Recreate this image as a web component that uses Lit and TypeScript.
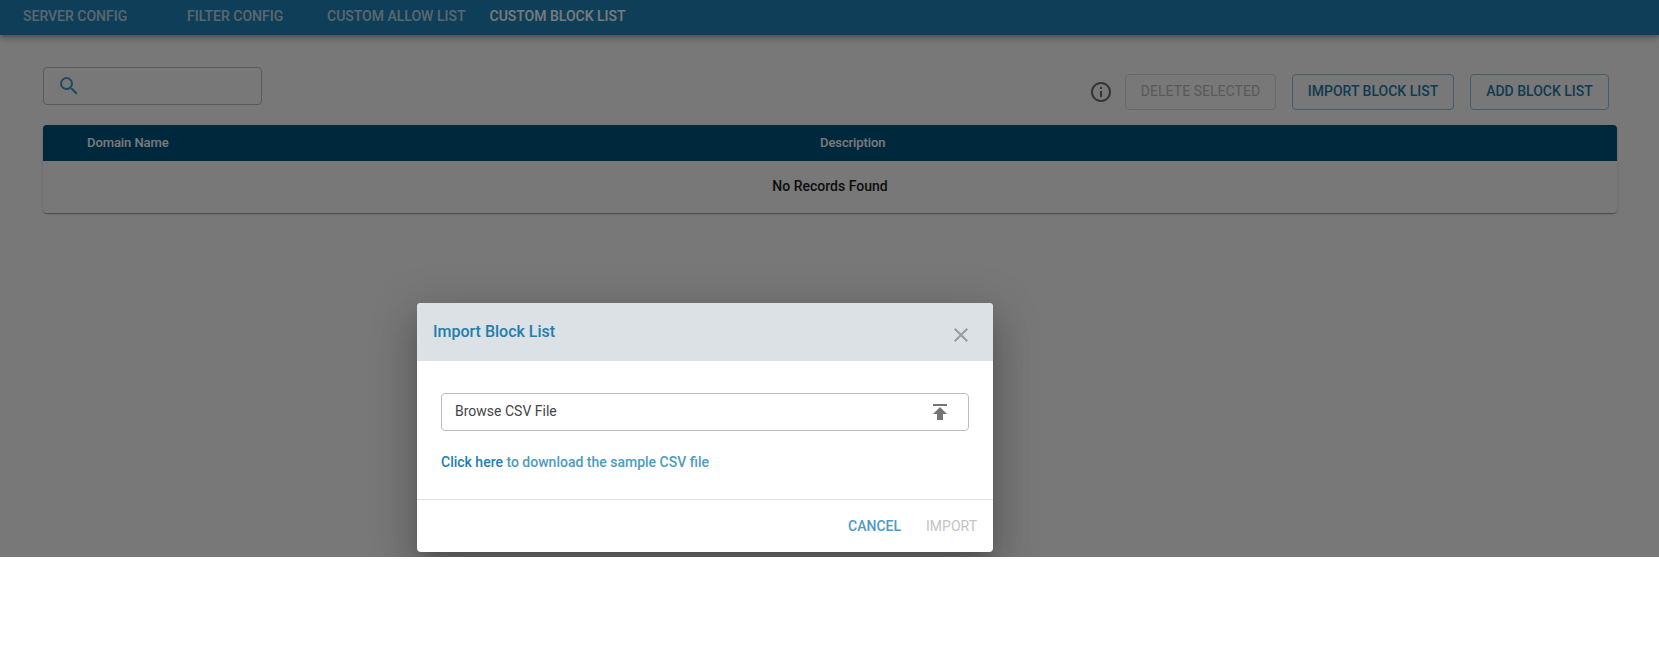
import { LitElement, html, css } from "lit";
import { customElement, state } from "lit/decorators.js";

@customElement("import-dialog")
class ImportDialog extends LitElement {
  static styles = css`
    :host {
      display: flex;
      flex-direction: column;
      width: 576px;
      height: 249px;
      border-radius: 4px;
      overflow: hidden;
      background: #fff;
      font-family: Roboto, sans-serif;
      box-shadow: 0 11px 15px -7px rgba(0, 0, 0, 0.2), 0 24px 38px 3px rgba(0, 0, 0, 0.14), 0 9px 46px 8px rgba(0, 0, 0, 0.12);
    }
    * { box-sizing: border-box; }
    svg { display: block; width: 24px; height: 24px; fill: currentColor; }
    .head {
      display: flex;
      justify-content: space-between;
      height: 58px;
      padding: 17px 20px 0 16px;
      background: #dce1e5;
      border-bottom: 1px solid #e0e0e0;
      color: #1f7eae;
      font-size: 16px;
      font-weight: 500;
      line-height: 24px;
    }
    .close { margin-top: 3px; color: #9b9b9b; }
    .body { flex: 1; padding: 32px 24px 0; }
    .file {
      display: flex;
      align-items: center;
      justify-content: space-between;
      height: 38px;
      padding: 0 16px 0 13px;
      border: 1px solid #bdbdbd;
      border-radius: 4px;
      color: #444;
      font-size: 14px;
      line-height: 20px;
    }
    .file span { margin-top: -2px; }
    .file svg { color: #757575; }
    .hint {
      margin-top: 21px;
      color: #4d9bc2;
      font-size: 14px;
      font-weight: 500;
      line-height: 20px;
    }
    .link { color: #1f7eae; }
    .foot {
      display: flex;
      justify-content: flex-end;
      align-items: center;
      gap: 25px;
      height: 53px;
      padding: 0 16px 1px 0;
      border-top: 1px solid #e0e0e0;
      color: #4d9bc2;
      font-size: 14px;
      font-weight: 500;
    }
    .off { color: #c4c4c4; font-weight: 400; }
  `;

  render() {
    return html`
      <div class="head">
        <span>Import Block List</span>
        <svg class="close" viewBox="0 0 24 24"><path d="M19 6.41 17.59 5 12 10.59 6.41 5 5 6.41 10.59 12 5 17.59 6.41 19 12 13.41 17.59 19 19 17.59 13.41 12z"/></svg>
      </div>
      <div class="body">
        <div class="file">
          <span>Browse CSV File</span>
          <svg viewBox="0 0 24 24"><path d="M5 4v2h14V4H5zm0 10h4v6h6v-6h4l-7-7-7 7z"/></svg>
        </div>
        <div class="hint"><span class="link">Click here</span> to download the sample CSV file</div>
      </div>
      <div class="foot"><span>CANCEL</span><span class="off">IMPORT</span></div>
    `;
  }
}

@customElement("app-root")
class AppRoot extends LitElement {
  @state() tabs = [
    { label: "SERVER CONFIG", cls: "t1" },
    { label: "FILTER CONFIG", cls: "t2" },
    { label: "CUSTOM ALLOW LIST", cls: "t3" },
    { label: "CUSTOM BLOCK LIST", cls: "t4" },
  ];

  static styles = css`
    :host { display: block; height: 648px; background: #fff; font-family: Roboto, sans-serif; font-size: 14px; }
    * { box-sizing: border-box; }
    svg { display: block; width: 24px; height: 24px; fill: currentColor; }
    .screen { position: relative; height: 557px; overflow: hidden; background: #fafafa; }
    .bar {
      display: flex;
      height: 35px;
      padding-left: 23px;
      background: #2185b8;
      box-shadow: 0 2px 4px -1px rgba(0, 0, 0, 0.2), 0 4px 5px rgba(0, 0, 0, 0.14), 0 1px 10px rgba(0, 0, 0, 0.12);
      color: rgba(255, 255, 255, 0.7);
      font-weight: 500;
      line-height: 33px;
      white-space: nowrap;
    }
    .t1, .t2, .t3, .t4 { flex: none; }
    .t1 { width: 164px; }
    .t2 { width: 140px; }
    .t3 { width: 162.5px; }
    .t4 { color: #fff; }
    .tools { display: flex; justify-content: space-between; padding: 32px 50px 0 43px; height: 90px; }
    .search {
      width: 219px;
      height: 38px;
      padding: 6px 13px;
      border: 1px solid #bdbdbd;
      border-radius: 4px;
      color: #3e9cca;
    }
    .actions { display: flex; align-items: center; gap: 16px; height: 36px; margin-top: 7px; }
    .info { margin-right: -4px; color: #6b6b6b; }
    .btn {
      height: 36px;
      border: 1px solid #90c1da;
      border-radius: 4px;
      color: #1f7eae;
      font-weight: 500;
      line-height: 33px;
      text-align: center;
      white-space: nowrap;
    }
    .del { width: 151px; border-color: #dadada; color: #bababa; font-weight: 400; letter-spacing: 0.05px; }
    .imp { width: 162px; }
    .add { width: 139px; }
    .table {
      margin: 0 42px 0 43px;
      height: 88px;
      border-radius: 4px;
      overflow: hidden;
      background: #fafafa;
      box-shadow: 0 2px 1px -1px rgba(0, 0, 0, 0.2), 0 1px 1px rgba(0, 0, 0, 0.14), 0 1px 3px rgba(0, 0, 0, 0.12);
    }
    .thead {
      display: grid;
      grid-template-columns: 733px 1fr;
      height: 36px;
      padding-left: 44px;
      background: #005580;
      color: #fff;
      font-size: 13px;
      font-weight: 500;
      line-height: 35px;
      letter-spacing: -0.08px;
    }
    .empty { color: #212121; font-weight: 500; line-height: 50px; text-align: center; }
    .backdrop { position: absolute; inset: 0; padding: 303px 0 0 417px; background: rgba(0, 0, 0, 0.52); }
  `;

  render() {
    return html`
      <div class="screen">
        <div class="bar">${this.tabs.map((t) => html`<span class=${t.cls}>${t.label}</span>`)}</div>
        <div class="tools">
          <div class="search">
            <svg class="glass" viewBox="0 0 24 24"><path d="M15.5 14h-.79l-.28-.27A6.471 6.471 0 0 0 16 9.5 6.5 6.5 0 1 0 9.5 16c1.61 0 3.09-.59 4.23-1.57l.27.28v.79l5 4.99L20.49 19l-4.99-5zm-6 0C7.01 14 5 11.99 5 9.5S7.01 5 9.5 5 14 7.01 14 9.5 11.99 14 9.5 14z"/></svg>
          </div>
          <div class="actions">
            <svg class="info" viewBox="0 0 24 24"><path d="M11 7h2v2h-2zm0 4h2v6h-2zm1-9C6.48 2 2 6.48 2 12s4.48 10 10 10 10-4.48 10-10S17.52 2 12 2zm0 18c-4.41 0-8-3.59-8-8s3.59-8 8-8 8 3.59 8 8-3.59 8-8 8z"/></svg>
            <div class="btn del">DELETE SELECTED</div>
            <div class="btn imp">IMPORT BLOCK LIST</div>
            <div class="btn add">ADD BLOCK LIST</div>
          </div>
        </div>
        <div class="table">
          <div class="thead"><span>Domain Name</span><span>Description</span></div>
          <div class="empty">No Records Found</div>
        </div>
        <div class="backdrop"><import-dialog></import-dialog></div>
      </div>
    `;
  }
}
